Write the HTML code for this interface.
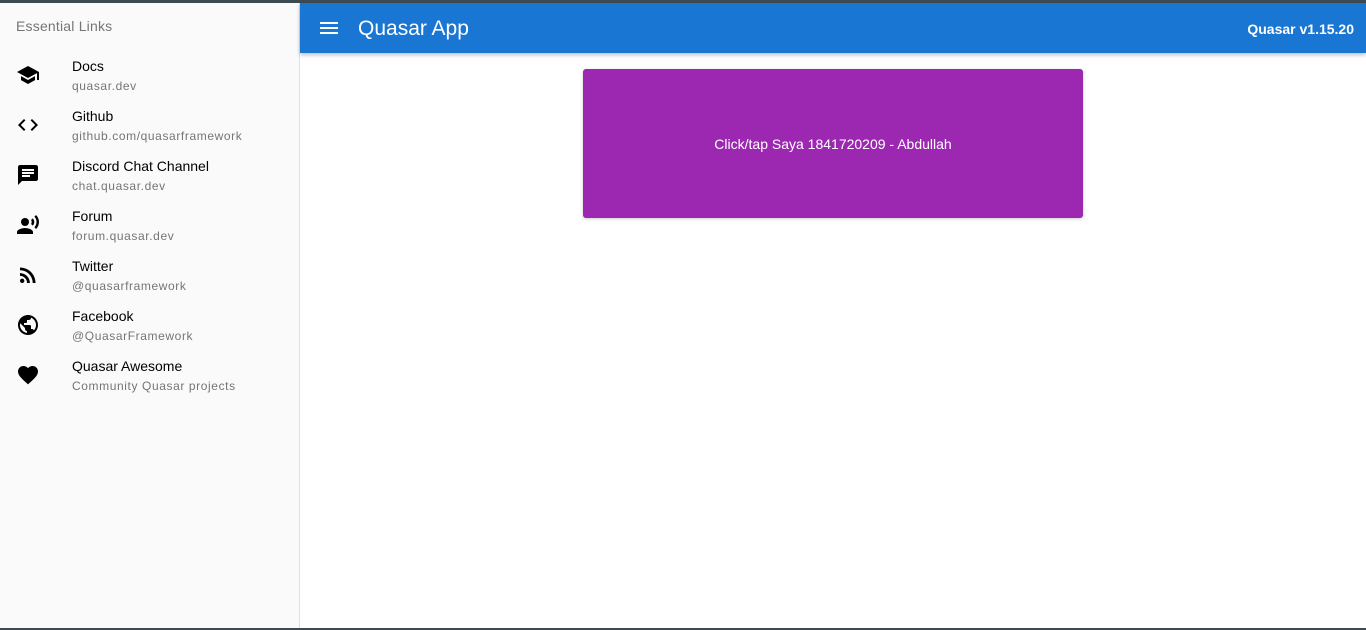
<!DOCTYPE html>
<html><head><style>
*{margin:0;padding:0;box-sizing:border-box}
body{width:1366px;height:630px;overflow:hidden;background:#fff;font-family:"Liberation Sans",Roboto,sans-serif;position:relative}
.top{position:absolute;left:0;top:0;width:1366px;height:3px;background:#3c4a52}
.bot{position:absolute;left:0;top:628px;width:1366px;height:2px;background:#3c4a52}
.side{position:absolute;left:0;top:3px;width:300px;height:625px;background:#fafafa;border-right:1px solid #e0e0e0}
.hdr{position:absolute;left:16px;top:15px;font-size:14px;color:#757575;letter-spacing:.2px}
.item{position:absolute;left:0;width:299px;height:50px}
.item svg{position:absolute;left:16px;top:13px;width:24px;height:24px}
.t{position:absolute;left:72px;top:8px;font-size:14px;color:#000}
.c{position:absolute;left:72px;top:29px;font-size:12px;color:#757575;letter-spacing:.6px}
.bar{position:absolute;left:300px;top:3px;width:1066px;height:50px;background:#1976d2;box-shadow:0 2px 4px rgba(0,0,0,.25);color:#fff}
.bar .ttl{position:absolute;left:58px;top:14px;font-size:21px}
.bar .v{position:absolute;right:12px;top:18px;font-size:14px;font-weight:bold}
.bar svg{position:absolute;left:17px;top:13px}
.btn{position:absolute;left:583px;top:69px;width:500px;height:149px;background:#9c27b0;border-radius:3px;color:#fff;font-size:14px;text-align:center;line-height:151px;box-shadow:0 1px 3px rgba(0,0,0,.2)}
</style></head><body>
<div class="top"></div>
<div class="side">
<div class="hdr">Essential Links</div>
<div class="item" style="top:47px"><svg viewBox="0 0 24 24"><path d="M5 13.18v4L12 21l7-3.82v-4L12 17l-7-3.82zM12 3L1 9l11 6 9-4.91V17h2V9L12 3z"/></svg><div class="t">Docs</div><div class="c">quasar.dev</div></div>
<div class="item" style="top:97px"><svg viewBox="0 0 24 24"><path d="M9.4 16.6L4.8 12l4.6-4.6L8 6l-6 6 6 6 1.4-1.4zm5.2 0l4.6-4.6-4.6-4.6L16 6l6 6-6 6-1.4-1.4z"/></svg><div class="t">Github</div><div class="c">github.com/quasarframework</div></div>
<div class="item" style="top:147px"><svg viewBox="0 0 24 24"><path d="M20 2H4c-1.1 0-1.99.9-1.99 2L2 22l4-4h14c1.1 0 2-.9 2-2V4c0-1.1-.9-2-2-2zM6 9h12v2H6V9zm8 5H6v-2h8v2zm4-6H6V6h12v2z"/></svg><div class="t">Discord Chat Channel</div><div class="c">chat.quasar.dev</div></div>
<div class="item" style="top:197px"><svg viewBox="0 0 24 24"><circle cx="9" cy="9" r="4"/><path d="M9 15c-2.67 0-8 1.34-8 4v2h16v-2c0-2.66-5.33-4-8-4zm7.76-9.64l-1.68 1.69c.84 1.18.84 2.71 0 3.89l1.68 1.69c2.02-2.02 2.02-5.07 0-7.27zM20.07 2l-1.63 1.63c2.77 3.02 2.77 7.56 0 10.74L20.07 16c3.9-3.89 3.91-9.95 0-14z"/></svg><div class="t">Forum</div><div class="c">forum.quasar.dev</div></div>
<div class="item" style="top:247px"><svg viewBox="0 0 24 24"><circle cx="6.18" cy="17.82" r="2.18"/><path d="M4 4.44v2.83c7.03 0 12.73 5.7 12.73 12.73h2.83c0-8.59-6.97-15.56-15.56-15.56zm0 5.66v2.83c3.9 0 7.07 3.17 7.07 7.07h2.83c0-5.47-4.43-9.9-9.9-9.9z"/></svg><div class="t">Twitter</div><div class="c">@quasarframework</div></div>
<div class="item" style="top:297px"><svg viewBox="0 0 24 24"><path d="M12 2C6.48 2 2 6.48 2 12s4.48 10 10 10 10-4.48 10-10S17.52 2 12 2zm-1 17.93c-3.95-.49-7-3.85-7-7.93 0-.62.08-1.21.21-1.79L9 15v1c0 1.1.9 2 2 2v1.93zm6.9-2.54c-.26-.81-1-1.39-1.9-1.39h-1v-3c0-.55-.45-1-1-1H8v-2h2c.55 0 1-.45 1-1V7h2c1.1 0 2-.9 2-2v-.41c2.93 1.19 5 4.06 5 7.41 0 2.08-.8 3.970-2.1 5.39z"/></svg><div class="t">Facebook</div><div class="c">@QuasarFramework</div></div>
<div class="item" style="top:347px"><svg viewBox="0 0 24 24"><path d="M12 21.35l-1.45-1.32C5.4 15.36 2 12.28 2 8.5 2 5.42 4.42 3 7.5 3c1.74 0 3.41.81 4.5 2.09C13.09 3.81 14.76 3 16.5 3 19.58 3 22 5.42 22 8.5c0 3.78-3.4 6.86-8.55 11.54L12 21.35z"/></svg><div class="t">Quasar Awesome</div><div class="c">Community Quasar projects</div></div>
</div>
<div class="bar"><svg width="24" height="24" viewBox="0 0 24 24" fill="#fff"><path d="M3 18h18v-2H3v2zm0-5h18v-2H3v2zm0-7v2h18V6H3z"/></svg><div class="ttl">Quasar App</div><div class="v">Quasar v1.15.20</div></div>
<div class="btn">Click/tap Saya 1841720209 - Abdullah</div>
<div class="bot"></div>
</body></html>
